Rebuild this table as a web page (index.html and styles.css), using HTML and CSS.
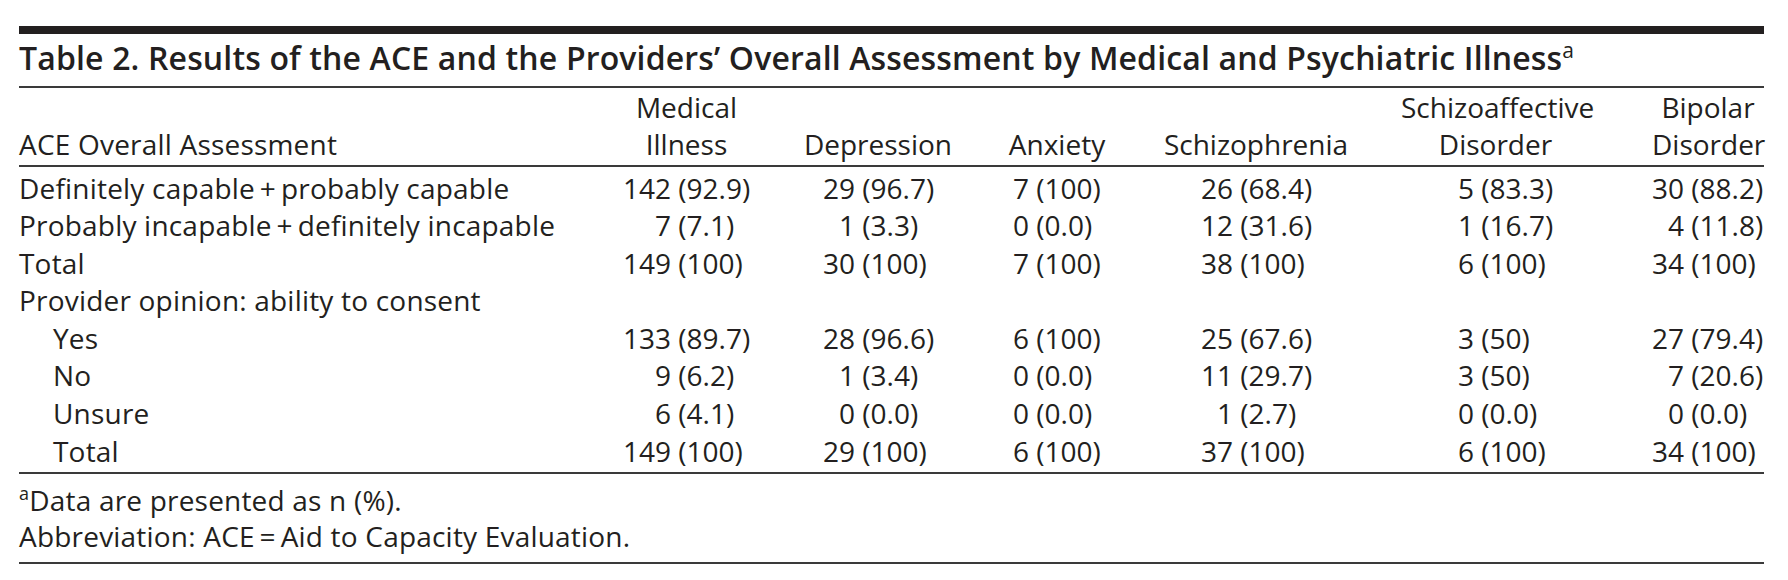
FILE: index.html
```html
<!DOCTYPE html>
<html lang="en">
<head>
<meta charset="utf-8">
<title>Table 2</title>
<link rel="stylesheet" href="styles.css">
</head>
<body>
<div class="sheet">
  <h1 class="title">Table 2. Results of the ACE and the Providers’ Overall Assessment by Medical and Psychiatric Illness<span class="sup sup-title">a</span></h1>

  <div class="grid head">
    <div class="lab hcell">ACE Overall Assessment</div>
    <div class="k1 hcell">Medical<br>Illness</div>
    <div class="k2 hcell">Depression</div>
    <div class="k3 hcell">Anxiety</div>
    <div class="k4 hcell">Schizophrenia</div>
    <div class="k5 hcell">Schizoaffective<br>Disorder</div>
    <div class="k6 hcell">Bipolar<br>Disorder</div>
  </div>

  <div class="grid body">
    <div class="lab">Definitely capable&#8201;+&#8201;probably capable</div>
    <div class="k1"><span class="n w3">142</span> (92.9)</div>
    <div class="k2"><span class="n w2">29</span> (96.7)</div>
    <div class="k3"><span class="n w1">7</span> (100)</div>
    <div class="k4"><span class="n w2">26</span> (68.4)</div>
    <div class="k5"><span class="n w1">5</span> (83.3)</div>
    <div class="k6"><span class="n w2">30</span> (88.2)</div>

    <div class="lab">Probably incapable&#8201;+&#8201;definitely incapable</div>
    <div class="k1"><span class="n w3">7</span> (7.1)</div>
    <div class="k2"><span class="n w2">1</span> (3.3)</div>
    <div class="k3"><span class="n w1">0</span> (0.0)</div>
    <div class="k4"><span class="n w2">12</span> (31.6)</div>
    <div class="k5"><span class="n w1">1</span> (16.7)</div>
    <div class="k6"><span class="n w2">4</span> (11.8)</div>

    <div class="lab">Total</div>
    <div class="k1"><span class="n w3">149</span> (100)</div>
    <div class="k2"><span class="n w2">30</span> (100)</div>
    <div class="k3"><span class="n w1">7</span> (100)</div>
    <div class="k4"><span class="n w2">38</span> (100)</div>
    <div class="k5"><span class="n w1">6</span> (100)</div>
    <div class="k6"><span class="n w2">34</span> (100)</div>

    <div class="span">Provider opinion: ability to consent</div>

    <div class="lab ind">Yes</div>
    <div class="k1"><span class="n w3">133</span> (89.7)</div>
    <div class="k2"><span class="n w2">28</span> (96.6)</div>
    <div class="k3"><span class="n w1">6</span> (100)</div>
    <div class="k4"><span class="n w2">25</span> (67.6)</div>
    <div class="k5"><span class="n w1">3</span> (50)</div>
    <div class="k6"><span class="n w2">27</span> (79.4)</div>

    <div class="lab ind">No</div>
    <div class="k1"><span class="n w3">9</span> (6.2)</div>
    <div class="k2"><span class="n w2">1</span> (3.4)</div>
    <div class="k3"><span class="n w1">0</span> (0.0)</div>
    <div class="k4"><span class="n w2">11</span> (29.7)</div>
    <div class="k5"><span class="n w1">3</span> (50)</div>
    <div class="k6"><span class="n w2">7</span> (20.6)</div>

    <div class="lab ind">Unsure</div>
    <div class="k1"><span class="n w3">6</span> (4.1)</div>
    <div class="k2"><span class="n w2">0</span> (0.0)</div>
    <div class="k3"><span class="n w1">0</span> (0.0)</div>
    <div class="k4"><span class="n w2">1</span> (2.7)</div>
    <div class="k5"><span class="n w1">0</span> (0.0)</div>
    <div class="k6"><span class="n w2">0</span> (0.0)</div>

    <div class="lab ind">Total</div>
    <div class="k1"><span class="n w3">149</span> (100)</div>
    <div class="k2"><span class="n w2">29</span> (100)</div>
    <div class="k3"><span class="n w1">6</span> (100)</div>
    <div class="k4"><span class="n w2">37</span> (100)</div>
    <div class="k5"><span class="n w1">6</span> (100)</div>
    <div class="k6"><span class="n w2">34</span> (100)</div>
  </div>

  <div class="notes">
    <p class="note"><span class="sup sup-note">a</span>Data are presented as n (%).</p>
    <p class="note">Abbreviation: ACE&#8201;=&#8201;Aid to Capacity Evaluation.</p>
  </div>
</div>
</body>
</html>
```

FILE: styles.css
```css
* {
  box-sizing: border-box;
}

body {
  margin: 0;
  background: #ffffff;
  color: #231f20;
  font-family: "Open Sans", "Noto Sans", sans-serif;
  font-size: 28px;
}

.sheet {
  margin: 26px 0 0 19px;
  width: 1745px;
}

.title {
  margin: 0;
  border-top: 8px solid #231f20;
  border-bottom: 2px solid #3a3a3a;
  padding-bottom: 4px;
  font-size: 32px;
  font-weight: 600;
  letter-spacing: 0.15px;
  line-height: 48px;
  white-space: nowrap;
}

.sup {
  line-height: 0;
}

.sup-title {
  font-size: 21px;
  font-weight: 500;
  vertical-align: 12px;
}

.sup-note {
  font-size: 18px;
  vertical-align: 11px;
}

.grid {
  display: grid;
  grid-template-columns: 598px 139px 47px 150px 49px 110px 49px 190px 50px 189px 62px 112px;
  white-space: nowrap;
}

.head {
  padding: 1px 0 2px;
  border-bottom: 2px solid #3a3a3a;
  line-height: 37px;
}

.hcell {
  align-self: end;
  text-align: center;
}

.head .lab {
  text-align: left;
}

.body {
  padding: 2.5px 0 1.5px;
  border-bottom: 2px solid #3a3a3a;
  line-height: 37.6px;
  grid-auto-rows: 37.6px;
}

.lab { grid-column: 1; }
.span { grid-column: 1 / -1; }
.k1 { grid-column: 2; }
.k2 { grid-column: 4; }
.k3 { grid-column: 6; }
.k4 { grid-column: 8; }
.k5 { grid-column: 10; }
.k6 { grid-column: 12; }

.lab,
.span,
.note {
  letter-spacing: 0.2px;
}

.ind {
  padding-left: 34px;
}

.body .k1 { padding-left: 6px; }
.body .k2 { padding-left: 20px; }
.body .k3 { padding-left: 11px; }
.body .k4 { padding-left: 40px; }
.body .k5 { padding-left: 57px; }
.body .k6 { padding-left: 0; }

.n {
  display: inline-block;
  text-align: right;
}

.w1 { width: 1ch; }
.w2 { width: 2ch; }
.w3 { width: 3ch; }

.notes {
  padding: 8px 0;
  border-bottom: 2px solid #3a3a3a;
  line-height: 36px;
}

.note {
  margin: 0;
  white-space: nowrap;
}
```
